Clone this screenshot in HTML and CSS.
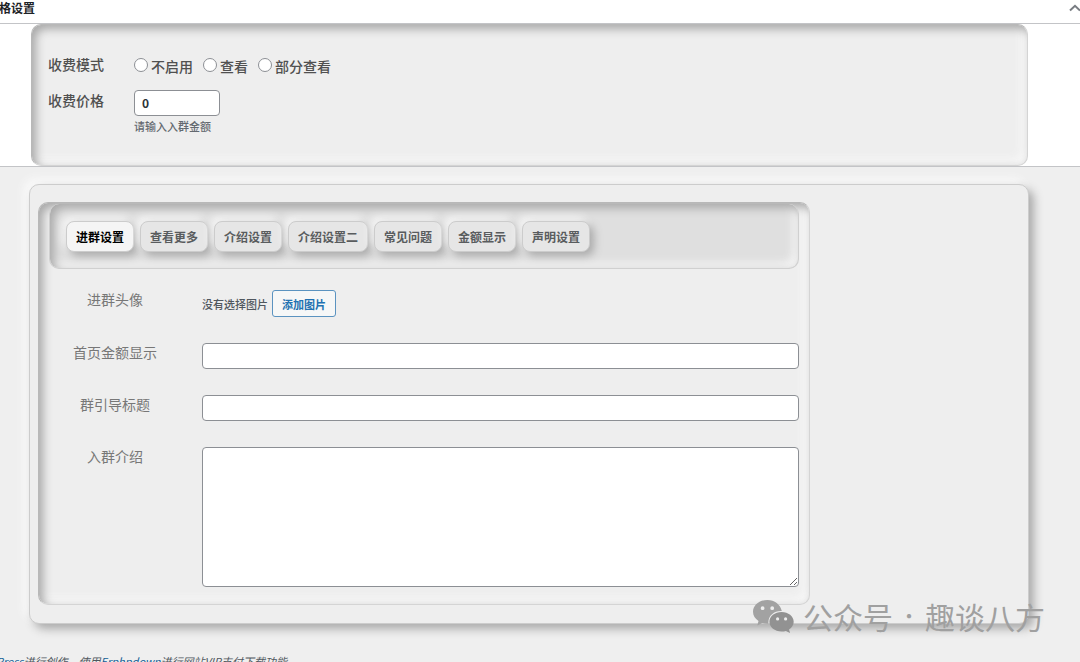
FILE: index.html
```html
<!DOCTYPE html>
<html lang="zh-CN">
<head>
<meta charset="utf-8">
<title>格设置</title>
<link rel="stylesheet" href="styles.css">
</head>
<body>
<section class="metabox">
  <header class="metabox-head">
    <h2 class="metabox-title">格设置</h2>
    <button class="toggle" type="button" aria-label="折叠">
      <svg width="12" height="8" viewBox="0 0 12 8" fill="none" stroke="#787c82" stroke-width="2"><path d="M1 6.500 6 1.800l5 4.700"/></svg>
    </button>
  </header>
  <div class="price-panel">
    <span class="price-label" id="mode-label">收费模式</span>
    <div class="radios" role="radiogroup" aria-labelledby="mode-label">
      <label class="radio-label"><input class="radio" type="radio" name="mode">不启用</label>
      <label class="radio-label"><input class="radio" type="radio" name="mode">查看</label>
      <label class="radio-label"><input class="radio" type="radio" name="mode">部分查看</label>
    </div>
    <label class="price-label" for="price">收费价格</label>
    <div class="price-field">
      <input class="text-input price-input" id="price" type="text" value="0">
      <p class="hint">请输入入群金额</p>
    </div>
  </div>
</section>

<main class="card">
  <div class="settings">
    <nav class="tabs">
      <button class="tab tab-active" type="button">进群设置</button>
      <button class="tab" type="button">查看更多</button>
      <button class="tab" type="button">介绍设置</button>
      <button class="tab" type="button">介绍设置二</button>
      <button class="tab" type="button">常见问题</button>
      <button class="tab" type="button">金额显示</button>
      <button class="tab" type="button">声明设置</button>
    </nav>
    <div class="fields">
      <span class="field-label">进群头像</span>
      <div class="picker">
        <span>没有选择图片</span>
        <button class="add-button" type="button">添加图片</button>
      </div>
      <label class="field-label" for="amount">首页金额显示</label>
      <input class="text-input" id="amount" type="text">
      <label class="field-label" for="guide">群引导标题</label>
      <input class="text-input" id="guide" type="text">
      <label class="field-label" for="intro">入群介绍</label>
      <textarea class="text-input text-area" id="intro"></textarea>
    </div>
  </div>
</main>

<footer class="footer"><a class="footer-link" href="#">Press</a>进行创作。使用<a class="footer-link" href="#">Erphpdown</a>进行网站VIP支付下载功能</footer>

<div class="watermark">
  <svg class="watermark-icon" width="42" height="34" viewBox="0 0 42 34">
    <path fill="#a2a2a2" fill-rule="evenodd" d="M14.500 1C6.500 1 0 6.200 0 12.800c0 3.800 2.100 7 5.500 9.200L4.300 26.500l5-2.600c1.600.5 3.400.8 5.200.8h1C14.600 17.500 20.500 12 28 12h.8C27.500 5.500 21.500 1 14.500 1ZM9.600 7.300a1.900 1.900 0 1 1 0 3.800 1.900 1.900 0 0 1 0-3.800Zm9.600 0a1.900 1.900 0 1 1 0 3.800 1.900 1.900 0 0 1 0-3.800Z"/>
    <path fill="#929292" fill-rule="evenodd" d="M28.600 13c-6.800 0-12.200 4.400-12.200 9.800s5.400 9.800 12.200 9.800c1.500 0 3-.2 4.300-.6l4.200 2-1.100-3.500c2.900-1.800 4.700-4.600 4.700-7.700 0-5.400-5.400-9.800-12.100-9.800Zm-4 5.300a1.600 1.600 0 1 1 0 3.200 1.600 1.600 0 0 1 0-3.200Zm8 0a1.600 1.600 0 1 1 0 3.200 1.600 1.600 0 0 1 0-3.200Z"/>
  </svg>
  <span>公众号</span><span class="watermark-dot">·</span><span>趣谈八方</span>
</div>
</body>
</html>
```

FILE: styles.css
```css
* {
  box-sizing: border-box;
}

html {
  height: 100%;
  overflow: hidden;
}

body {
  position: relative;
  height: 100%;
  margin: 0;
  overflow: hidden;
  background: #efefef;
  color: #50575e;
  font: 12px/18px "Noto Sans CJK SC", sans-serif;
}

button,
input,
textarea {
  font: inherit;
  color: inherit;
}

.metabox {
  background: #fff;
  border-bottom: 1px solid #c3c4c7;
}

.metabox-head {
  display: flex;
  align-items: center;
  justify-content: space-between;
  height: 24px;
  padding-bottom: 8px;
  border-bottom: 1px solid #c3c4c7;
}

.metabox-title {
  margin: 0 0 0 -1px;
  font-size: 12px;
  font-weight: 700;
  color: #1d2327;
}

.toggle {
  display: flex;
  margin-right: -1px;
  padding: 0;
  border: 0;
  background: none;
}

.price-panel {
  display: grid;
  grid-template-columns: 70px 1fr;
  column-gap: 16px;
  row-gap: 12px;
  align-content: start;
  min-height: 142px;
  margin: 0 52px 0 31px;
  padding: 29px 16px;
  border: 1px solid #d4d4d4;
  border-top-color: #b8b8b8;
  border-left-color: #b8b8b8;
  border-radius: 10px;
  background: #eee;
  box-shadow: inset 4px 4px 10px #a8a8a8, inset -5px -5px 10px #f8f8f8;
}

.price-label {
  font-size: 14px;
  line-height: 20px;
  font-weight: 500;
  color: #505050;
}

.radios {
  display: flex;
  gap: 10px;
}

.radio-label {
  display: flex;
  align-items: center;
  gap: 3px;
  font-size: 14px;
  line-height: 24px;
  font-weight: 500;
  color: #505050;
}

.radio {
  appearance: none;
  width: 14px;
  height: 14px;
  margin: 0 0 2px;
  border: 1px solid #8c8f94;
  border-radius: 50%;
  background: #fff;
}

.text-input {
  width: 100%;
  height: 26px;
  margin: 0;
  padding: 0 7px;
  border: 1px solid #8c8f94;
  border-radius: 4px;
  background: #fff;
  color: #2c3338;
}

.price-input {
  display: block;
  width: 86px;
  padding-bottom: 2px;
  font-weight: 700;
}

.hint {
  margin: 1px 0 0;
  font-size: 11px;
  font-weight: 500;
  color: #646970;
}

.card {
  margin: 17px 51px 0 29px;
  padding: 17px 8px 18px;
  border: 1px solid #ccc;
  border-radius: 10px;
  background: #eee;
  box-shadow: 5px 5px 10px #aaa, -5px -5px 10px #fafafa;
}

.settings {
  max-width: 772px;
  padding: 1px 10px 17px;
  border: 1px solid #d4d4d4;
  border-top-color: #b8b8b8;
  border-left-color: #b8b8b8;
  border-radius: 10px;
  box-shadow: inset 4px 4px 10px #a8a8a8, inset -5px -5px 10px #f8f8f8;
}

.tabs {
  display: flex;
  gap: 6px;
  padding: 17px 16px 16px;
  border: 1px solid #d0d0d0;
  border-top: 0;
  border-radius: 10px;
  background: #dfdfdf;
  box-shadow: inset 4px 4px 10px #a8a8a8, inset -5px -5px 8px #f6f6f6;
}

.tab {
  height: 31px;
  padding: 0 9px;
  border: 1px solid #ccc;
  border-radius: 8px;
  background: #e6e6e6;
  box-shadow: 4px 4px 8px #aaa, -4px -4px 8px #f8f8f8;
  color: #595c5e;
  font-weight: 700;
  white-space: nowrap;
}

.tab-active {
  background: #f5f5f5;
  color: #000;
}

.fields {
  display: grid;
  grid-template-columns: 132px 1fr;
  column-gap: 21px;
  row-gap: 26px;
  padding-top: 21px;
}

.field-label {
  font-size: 14px;
  line-height: 18px;
  text-align: center;
  color: #777;
}

.picker {
  display: flex;
  align-items: center;
  gap: 4px;
  font-size: 11px;
  font-weight: 500;
}

.add-button {
  height: 27px;
  padding: 0 9px;
  border: 1px solid #5b93c0;
  border-radius: 3px;
  background: #f6f7f7;
  color: #2271b1;
  font-weight: 700;
}

.text-area {
  display: block;
  height: 140px;
  padding: 4px 7px;
  resize: both;
}

.footer {
  margin: 28px 0 0 -4px;
  font-size: 11px;
  font-style: italic;
  white-space: nowrap;
}

.footer-link {
  color: #135e96;
  text-decoration: none;
}

.watermark {
  position: absolute;
  right: 35px;
  bottom: 24px;
  display: flex;
  align-items: center;
  color: #a0a0a0;
  font-size: 30px;
  line-height: 44px;
}

.watermark-icon {
  margin-right: 8px;
}

.watermark-dot {
  width: 32px;
  font-size: 20px;
  text-align: center;
}
```
